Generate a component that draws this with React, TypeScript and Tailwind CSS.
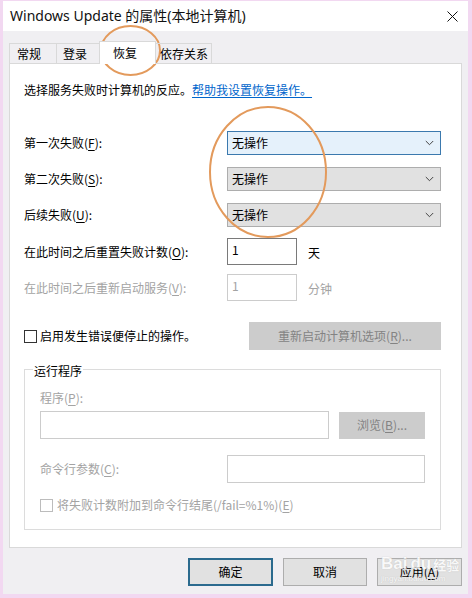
import React from "react";

const Chevron = () => (
  <svg width="9" height="6" viewBox="0 0 9 6" className="shrink-0">
    <path d="M0.8 1 L4.5 4.7 L8.2 1" fill="none" stroke="#444" strokeWidth="1" />
  </svg>
);

const Select = ({ active }: { active?: boolean }) => (
  <div
    className={
      "flex-1 h-[24px] flex items-center justify-between pl-[4px] pr-[6px] border " +
      (active ? "bg-[#e5f1fb] border-[#3b79ae]" : "bg-[#e1e1e1] border-[#adadad]")
    }
  >
    <span>无操作</span>
    <Chevron />
  </div>
);

const U = ({ c }: { c: string }) => <u className="underline-offset-2">{c}</u>;

export default function App() {
  return (
    <div className="relative w-[472px] h-[598px] overflow-hidden bg-[#f0eff2] border-t border-l-[3px] border-r-[4px] border-b-[4px] border-[#f2d8f1] flex flex-col text-[12px] text-black font-['Noto_Sans_CJK_SC',sans-serif] leading-[16px]">
      {/* title bar */}
      <div className="h-[30px] bg-white flex items-center justify-between pl-[7px] pr-[10px] shrink-0">
        <span className="text-[14px] font-['Noto_Sans','Noto_Sans_CJK_SC',sans-serif] text-[#111]">
          Windows Update 的属性(本地计算机)
        </span>
        <svg width="11" height="11" viewBox="0 0 11 11">
          <path d="M0.5 0.5 L10.5 10.5 M10.5 0.5 L0.5 10.5" stroke="#111" strokeWidth="1" />
        </svg>
      </div>

      {/* body */}
      <div className="flex flex-col pl-[6px] pr-[6px] pt-[10px]">
        {/* tabs */}
        <div className="relative z-10 flex items-end h-[23px] -mb-px">
          <div className="w-[48px] h-[21px] flex items-center pl-[7px] border border-[#d9d9d9]">常规</div>
          <div className="w-[43px] h-[21px] flex items-center pl-[6px] border border-l-0 border-[#d9d9d9]">登录</div>
          <div className="w-[57px] h-[23px] flex items-center pl-[13px] bg-white border border-b-0 border-[#d9d9d9] -ml-px">恢复</div>
          <div className="w-[56px] h-[21px] flex items-center pl-[4px] border border-l-0 border-[#d9d9d9]">依存关系</div>
        </div>

        {/* panel */}
        <div className="h-[485px] bg-white border border-[#d9d9d9] flex flex-col pl-[14px] pr-[20px] pt-[18px]">
          <div className="h-[16px] flex">
            <span>选择服务失败时计算机的反应。</span>
            <span className="text-[#0066cc] underline underline-offset-2">帮助我设置恢复操作。</span>
          </div>

          <div className="flex items-center mt-[33px]">
            <div className="w-[203px] shrink-0">第一次失败(<U c="F" />):</div>
            <Select active />
          </div>
          <div className="flex items-center mt-[12px]">
            <div className="w-[203px] shrink-0">第二次失败(<U c="S" />):</div>
            <Select />
          </div>
          <div className="flex items-center mt-[12px]">
            <div className="w-[203px] shrink-0">后续失败(<U c="U" />):</div>
            <Select />
          </div>

          <div className="flex items-center mt-[11px]">
            <div className="w-[203px] shrink-0">在此时间之后重置失败计数(<U c="O" />):</div>
            <div className="w-[70px] h-[27px] border border-[#7a7a7a] pl-[4px] pt-[3px]">1</div>
            <div className="ml-[11px] mt-[2px]">天</div>
          </div>
          <div className="flex items-center mt-[9px] text-[#a3a3a3]">
            <div className="w-[203px] shrink-0">在此时间之后重新启动服务(<U c="V" />):</div>
            <div className="w-[70px] h-[27px] border border-[#cccccc] pl-[4px] pt-[3px]">1</div>
            <div className="ml-[11px] mt-[2px]">分钟</div>
          </div>

          <div className="flex items-center justify-between mt-[21px]">
            <div className="flex items-center">
              <div className="w-[13px] h-[13px] border border-[#333] bg-white" />
              <span className="ml-[3px]">启用发生错误便停止的操作。</span>
            </div>
            <div className="w-[192px] h-[28px] bg-[#cccccc] text-[#838383] flex items-center justify-center">
              重新启动计算机选项(<U c="R" />)...
            </div>
          </div>

          {/* group box */}
          <div className="mt-[19px] h-[161px] border border-[#dcdcdc] flex flex-col pl-[15px] pr-[15px]">
            <div className="-mt-[7px] -ml-[7px] px-[1px] bg-white w-fit">运行程序</div>
            <div className="mt-[11px] text-[#a3a3a3]">程序(<U c="P" />):</div>
            <div className="flex items-center mt-[5px]">
              <div className="w-[289px] h-[28px] border border-[#cccccc]" />
              <div className="ml-[10px] w-[86px] h-[27px] bg-[#cccccc] text-[#838383] flex items-center justify-center">
                浏览(<U c="B" />)...
              </div>
            </div>
            <div className="flex items-center mt-[16px]">
              <div className="w-[187px] shrink-0 text-[#a3a3a3]">命令行参数(<U c="C" />):</div>
              <div className="w-[198px] h-[28px] border border-[#cccccc]" />
            </div>
            <div className="flex items-center mt-[14px] text-[#a3a3a3]">
              <div className="w-[13px] h-[13px] border border-[#bcbcbc] bg-white" />
              <span className="ml-[4px]">将失败计数附加到命令行结尾(/fail=%1%)(<U c="E" />)</span>
            </div>
          </div>
        </div>

        {/* bottom buttons */}
        <div className="flex justify-end gap-[10px] mt-[10px] pr-0">
          <div className="w-[85px] h-[28px] bg-[#e1e1e1] border-2 border-[#2b6a8e] flex items-center justify-center">确定</div>
          <div className="w-[84px] h-[28px] bg-[#e1e1e1] border border-[#adadad] flex items-center justify-center">取消</div>
          <div className="w-[85px] h-[28px] bg-[#e1e1e1] border border-[#adadad] flex items-center justify-center">
            应用(<U c="A" />)
          </div>
        </div>
      </div>

      {/* watermark */}
      <div className="absolute left-[378px] top-[553px] flex flex-col items-start whitespace-nowrap text-white opacity-80 pointer-events-none [text-shadow:0_0_1px_#b0b0b0]">
        <div className="flex items-end whitespace-nowrap font-['Liberation_Sans',sans-serif] font-bold text-[17px] leading-[20px]">
          <span>Bai</span>
          <span className="ml-[3px]">du</span>
          <span className="ml-[2px] text-[13px] leading-[18px] font-['Noto_Sans_CJK_SC',sans-serif]">经验</span>
        </div>
        <div className="text-[8px] leading-[10px] font-['Liberation_Sans',sans-serif] whitespace-nowrap">jingyan.baidu.com</div>
      </div>

      {/* annotation ellipses */}
      <svg className="absolute left-0 top-0 pointer-events-none" width="472" height="598">
        <ellipse cx="127.5" cy="49.5" rx="29.5" ry="24.5" fill="none" stroke="#e39a5c" strokeWidth="2" />
        <ellipse cx="265" cy="171" rx="58" ry="65" fill="none" stroke="#e39a5c" strokeWidth="2" />
      </svg>
    </div>
  );
}
